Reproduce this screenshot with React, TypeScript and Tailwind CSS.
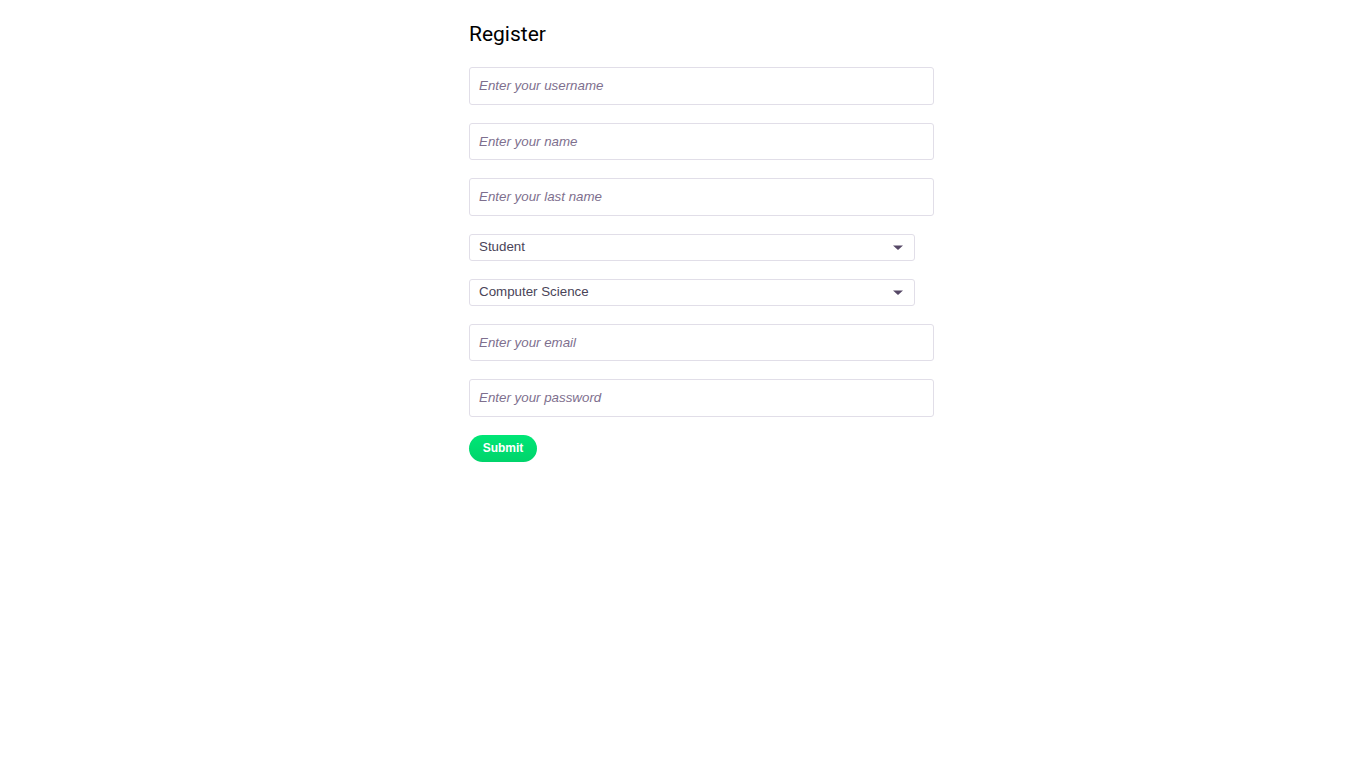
import React from "react";

const inputCls =
  "block w-[465px] h-[37.5px] rounded-[3px] border border-[#e1dee8] bg-white px-[9px] text-[13.333px] text-[#4a4458] italic placeholder:text-[#7e6f8e] outline-none";

function Caret() {
  return (
    <svg width="10" height="6" viewBox="0 0 10 6" className="absolute right-[11px] top-[10px]">
      <path d="M0 0.5 H10 L5 5 Z" fill="#564866" />
    </svg>
  );
}

function SelectBox({ value }: { value: string }) {
  return (
    <div className="relative w-[446px] h-[27px] rounded-[3px] border border-[#e1dee8] bg-white">
      <span className="block px-[9px] leading-[23px] text-[13.333px] text-[#4a4458]">{value}</span>
      <Caret />
    </div>
  );
}

export default function App() {
  return (
    <div
      className="min-h-screen bg-white pl-[469px] pt-[20px]"
      style={{ fontFamily: '"Liberation Sans", Arial, sans-serif' }}
    >
      <h2
        className="text-[21px] leading-[28px] text-black mb-[19px]"
        style={{ fontFamily: "Roboto, sans-serif" }}
      >
        Register
      </h2>
      <form className="flex flex-col gap-[18px]" onSubmit={(e) => e.preventDefault()}>
        <input className={inputCls} placeholder="Enter your username" />
        <input className={inputCls} placeholder="Enter your name" />
        <input className={inputCls} placeholder="Enter your last name" />
        <SelectBox value="Student" />
        <SelectBox value="Computer Science" />
        <input className={inputCls} placeholder="Enter your email" />
        <input className={inputCls} type="password" placeholder="Enter your password" />
        <div>
          <button
            type="submit"
            className="h-[27px] w-[68px] rounded-full bg-gradient-to-b from-[#00e676] to-[#00d46b] text-[12px] font-bold text-white"
          >
            Submit
          </button>
        </div>
      </form>
    </div>
  );
}
